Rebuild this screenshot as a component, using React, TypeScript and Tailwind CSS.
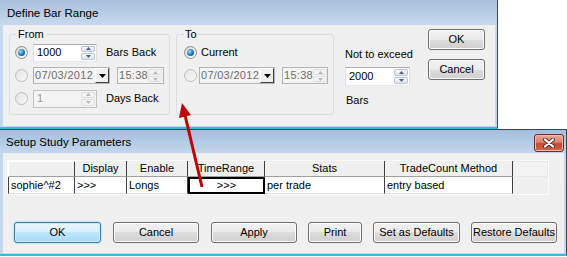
import React from "react";

const btn =
  "flex h-[21px] items-center justify-center rounded-[3px] border border-[#707070] bg-[linear-gradient(to_bottom,#f2f2f2_0%,#ebebeb_50%,#dddddd_50%,#cfcfcf_100%)] shadow-[inset_0_0_0_1px_#fbfbfb] text-[11px] text-black";

const btnDefault =
  "flex h-[21px] items-center justify-center rounded-[3px] border border-[#3c7fb1] bg-[linear-gradient(to_bottom,#eaf6fd_0%,#d9f0fc_50%,#bee6fd_50%,#a7d9f5_100%)] shadow-[inset_0_0_0_1px_#c5ecff,0_0_2px_#5cb8f0] text-[11px] text-black";

function Radio({ on, disabled }: { on?: boolean; disabled?: boolean }) {
  return (
    <span
      className={`flex h-[13px] w-[13px] shrink-0 items-center justify-center rounded-full border ${
        disabled
          ? "border-[#bdbdbd] bg-[linear-gradient(135deg,#e2e2e2,#fafafa)]"
          : "border-[#8e8f8f] bg-[linear-gradient(135deg,#d6d6d6,#ffffff)]"
      }`}
    >
      {on && (
        <span className="h-[7px] w-[7px] rounded-full bg-[radial-gradient(circle_at_35%_35%,#9fdcff,#1c78bd_55%,#0c4779)]" />
      )}
    </span>
  );
}

function Arrow({ up, disabled }: { up?: boolean; disabled?: boolean }) {
  const c = disabled ? "#b9b9b9" : "#4b6183";
  return (
    <div
      className={`flex flex-1 items-center justify-center rounded-[2px] border ${
        disabled ? "border-[#dedede] bg-[#f4f4f4]" : "border-[#b8c4d2] bg-[linear-gradient(#f7f9fb,#dde4ec)]"
      }`}
    >
      <svg width="5" height="3" viewBox="0 0 5 3">
        <polygon points={up ? "0,3 2.5,0 5,3" : "0,0 5,0 2.5,3"} fill={c} />
      </svg>
    </div>
  );
}

function Spin({ disabled }: { disabled?: boolean }) {
  return (
    <div className="flex w-[15px] shrink-0 flex-col gap-px py-px pr-px">
      <Arrow up disabled={disabled} />
      <Arrow disabled={disabled} />
    </div>
  );
}

function NumBox({ value, w, h, disabled }: { value: string; w: string; h: string; disabled?: boolean }) {
  return (
    <div
      className={`flex ${w} ${h} border ${
        disabled ? "border-[#c3c3c3] bg-[#f4f4f4] text-[#9a9a9a]" : "border-[#abadb3] border-b-[#e3e9ef] border-x-[#dbdfe6] bg-white text-black"
      }`}
    >
      <span className="flex flex-1 items-center pl-[3px] text-[11px]">{value}</span>
      <Spin disabled={disabled} />
    </div>
  );
}

function DateBox({ w }: { w: string }) {
  return (
    <div className={`flex ${w} h-[17px] border border-[#b4b4b4] bg-[#f4f4f4] text-[#6d6d6d]`}>
      <span className="flex flex-1 items-center pl-[1px] text-[11px] tracking-[0.3px]">07/03/2012</span>
      <div className="flex w-[14px] items-center justify-center border border-t-white border-l-white border-b-[#404040] border-r-[#404040] bg-[#f0f0f0]">
        <svg width="7" height="4" viewBox="0 0 7 4">
          <polygon points="0,0 7,0 3.5,4" fill="#000" />
        </svg>
      </div>
    </div>
  );
}

function TimeBox({ w }: { w: string }) {
  return (
    <div className={`flex ${w} h-[17px] border border-[#b4b4b4] bg-[#f4f4f4] text-[#6d6d6d]`}>
      <span className="flex flex-1 items-center pl-[1px] text-[11px] tracking-[0.3px]">15:38</span>
      <Spin disabled />
    </div>
  );
}

function DefineBarRange() {
  return (
    <div className="absolute left-0 top-0 flex h-[129px] w-[498px] flex-col border-r border-r-[#3a4656] border-b-2 border-b-[#3ab8e2] bg-[linear-gradient(to_bottom,#a9c1dd,#c6d9ee_25px,#c3d7ec)] pl-[3px] pr-[2px] pb-[1px]">
      <div className="flex h-[25px] shrink-0 items-center pl-[4px] pt-[2px] text-[11.5px] text-black">Define Bar Range</div>
      <div className="flex flex-1 items-start bg-[#f0f0f0] pl-[6px] pt-[3px]">
        <fieldset className="h-[87px] w-[161px] rounded-[3px] border border-[#d5dfe5] pl-[5px]">
          <legend className="ml-[1px] px-[2px] text-[11px] leading-[13px]">From</legend>
          <div className="flex h-[23px] items-center">
            <Radio on />
            <div className="ml-[5px]">
              <NumBox value="1000" w="w-[64px]" h="h-[18px]" />
            </div>
            <span className="ml-[9px] text-[11px]">Bars Back</span>
          </div>
          <div className="flex h-[23px] items-center">
            <Radio disabled />
            <div className="ml-[5px]">
              <DateBox w="w-[77px]" />
            </div>
            <div className="ml-[7px]">
              <TimeBox w="w-[47px]" />
            </div>
          </div>
          <div className="flex h-[23px] items-center">
            <Radio disabled />
            <div className="ml-[5px]">
              <NumBox value="1" w="w-[64px]" h="h-[18px]" disabled />
            </div>
            <span className="ml-[9px] text-[11px]">Days Back</span>
          </div>
        </fieldset>
        <fieldset className="ml-[6px] h-[87px] w-[158px] rounded-[3px] border border-[#d5dfe5] pl-[7px]">
          <legend className="px-[1px] text-[11px] leading-[13px]">To</legend>
          <div className="flex h-[23px] items-center">
            <Radio on />
            <span className="ml-[4px] text-[11px]">Current</span>
          </div>
          <div className="flex h-[23px] items-center">
            <Radio disabled />
            <div className="ml-[2px]">
              <DateBox w="w-[76px]" />
            </div>
            <div className="ml-[7px]">
              <TimeBox w="w-[46px]" />
            </div>
          </div>
        </fieldset>
        <div className="ml-[11px] flex flex-col pt-[20px] text-[11px] leading-[13px]">
          <span>Not to exceed</span>
          <div className="mt-[6px]">
            <NumBox value="2000" w="w-[65px]" h="h-[19px]" />
          </div>
          <span className="mt-[8px] pl-px">Bars</span>
        </div>
        <div className="ml-auto mr-[10px] flex flex-col gap-[9px] pt-[1px]">
          <button className={`${btn} w-[57px]`}>OK</button>
          <button className={`${btn} w-[57px]`}>Cancel</button>
        </div>
      </div>
    </div>
  );
}

const cols = [
  { label: "", w: "w-[67px]", val: "sophie^#2" },
  { label: "Display", w: "w-[52px]", val: ">>>" },
  { label: "Enable", w: "w-[61px]", val: "Longs" },
  { label: "TimeRange", w: "w-[77px]", val: ">>>" },
  { label: "Stats", w: "w-[120px]", val: "per trade" },
  { label: "TradeCount Method", w: "w-[128px]", val: "entry based" },
];

function SetupStudy() {
  return (
    <div className="absolute left-0 top-[129px] flex h-[127px] w-[567px] flex-col border-t border-t-[#3a4656] border-r border-r-[#3a4656] border-b-2 border-b-[#3ab8e2] bg-[linear-gradient(to_bottom,#a3bedc,#c3d7ed_23px,#c3d7ec)] pl-[3px] pr-[2px] pb-[1px]">
      <div className="flex h-[23px] shrink-0 items-center justify-between pl-[3px] pt-[2px] text-[11.5px] text-black">
        <span>Setup Study Parameters</span>
        <div className="flex h-[18px] w-[30px] items-center justify-center rounded-[3px] border border-[#6b2e28] bg-[linear-gradient(to_bottom,#e9a898_0%,#d9826f_45%,#c5462f_55%,#cf6a4f_100%)] shadow-[inset_0_0_0_1px_#efb9ab]">
          <svg width="12" height="10" viewBox="0 0 12 10">
            <path d="M2 1.5 L10 8.5 M10 1.5 L2 8.5" stroke="#5a2a26" strokeWidth="4" strokeLinecap="round" />
            <path d="M2 1.5 L10 8.5 M10 1.5 L2 8.5" stroke="#ffffff" strokeWidth="2.2" strokeLinecap="round" />
          </svg>
        </div>
      </div>
      <div className="flex flex-1 flex-col bg-[#f0f0f0]">
        <div className="ml-[4px] mt-[7px] w-[542px] border border-[#fbfbfb] border-b-[#fdfdfd]">
          <div className="flex h-[16px] text-[11px]">
            {cols.map((c, i) => (
              <div
                key={i}
                className={`${c.w} flex items-center justify-center border-b border-b-[#a0a0a0] ${
                  i === 0
                    ? "border-l border-t border-l-white border-t-white border-r border-r-[#404040] bg-[#f0f0f0]"
                    : "border-r border-r-[#404040] bg-[#f0f0f0]"
                }`}
              >
                {c.label}
              </div>
            ))}
            <div className="flex-1 border border-[#e8e8e8] bg-[#f3f3f3]" />
          </div>
          <div className="flex h-[17px] text-[11px]">
            {cols.map((c, i) => (
              <div
                key={i}
                className={`${c.w} flex items-center bg-white ${
                  i === 3
                    ? "justify-center border-2 border-black"
                    : i === 0
                    ? "border-l border-l-[#404040] border-r border-r-[#404040] pl-[2px] border-b border-b-[#e0e0e0]"
                    : "border-r border-r-[#404040] pl-[2px] border-b border-b-[#e0e0e0]"
                }`}
              >
                {c.val}
              </div>
            ))}
          </div>
        </div>
        <div className="mt-[27px] flex pl-[11px]">
          <button className={`${btnDefault} w-[87px]`}>OK</button>
          <button className={`${btn} ml-[12px] w-[86px]`}>Cancel</button>
          <button className={`${btn} ml-[12px] w-[86px]`}>Apply</button>
          <button className={`${btn} ml-[11px] w-[54px]`}>Print</button>
          <button className={`${btn} ml-[11px] w-[87px]`}>Set as Defaults</button>
          <button className={`${btn} ml-[11px] w-[86px]`}>Restore Defaults</button>
        </div>
      </div>
    </div>
  );
}

export default function App() {
  return (
    <div className="relative h-[257px] w-[567px] overflow-hidden bg-white font-['Liberation_Sans',Arial,sans-serif] text-[11px] text-black">
      <DefineBarRange />
      <SetupStudy />
      <svg className="pointer-events-none absolute left-0 top-0" width="567" height="257" viewBox="0 0 567 257">
        <line x1="202" y1="187" x2="185" y2="115" stroke="#c00000" strokeWidth="3" />
        <polygon points="182,103 191,115 179,118" fill="#c00000" />
      </svg>
    </div>
  );
}
